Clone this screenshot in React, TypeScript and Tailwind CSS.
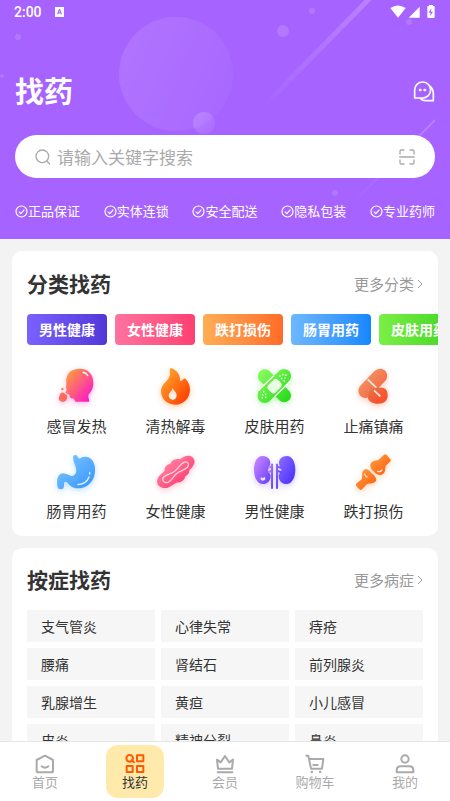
import React, { ReactNode } from 'react'

const chips = [
  { name: '男性健康', color: 'from-[#7b61ff] to-[#5237d8]' },
  { name: '女性健康', color: 'from-[#ff719f] to-[#ff3f72]' },
  { name: '跌打损伤', color: 'from-[#ffad55] to-[#ff6b29]' },
  { name: '肠胃用药', color: 'from-[#6db8ff] to-[#1187ff]' },
  { name: '皮肤用药', color: 'from-[#7bef45] to-[#37d421]' },
]

const symptoms = [
  '支气管炎', '心律失常', '痔疮',
  '腰痛', '肾结石', '前列腺炎',
  '乳腺增生', '黄疸', '小儿感冒',
  '皮炎', '精神分裂', '鼻炎',
]

const features = ['正品保证', '实体连锁', '安全配送', '隐私包装', '专业药师']

interface GradientProps {
  id: string
  from: string
  to: string
  flip?: boolean
}

function Gradient({ id, from, to, flip }: GradientProps) {
  return (
    <linearGradient id={id} x1={flip ? '1' : '0'} y1="0" x2={flip ? '0' : '1'} y2="1">
      <stop offset="0.1" stopColor={from} />
      <stop offset="0.9" stopColor={to} />
    </linearGradient>
  )
}

const categories: { name: string; viewBox: string; glow: string; icon: ReactNode }[] = [
  {
    name: '感冒发热',
    viewBox: '39 25 144 144',
    glow: 'drop-shadow-[0_2px_3px_#ff2fb055]',
    icon: (
      <>
        <defs><Gradient id="head" from="#ff9a3c" to="#ff18c8" /></defs>
        <path fill="url(#head)" d="M148 141H106C103 135 102 131 96 131C88 131 90 124 88 120C84 117 79 117 79 111C81 106 78 102 78 97C80 90 78 82 79 73C82 52 97 42 120 42C145 42 160 59 160 85C160 103 153 112 146 119C143 126 148 134 148 141Z" />
        <path fill="#ff6a5e" d="M62 116C66 111 74 114 75 118C81 119 84 126 81 132C78 140 71 142 65 141C58 140 55 134 57 128C58 124 59 121 62 116Z" />
        <circle cx="67" cy="103" r="4" fill="#ff8a58" />
        <circle cx="81" cy="113" r="4" fill="#ff7a70" />
        <path d="M130 53Q138 54 143 62" stroke="#fff" strokeWidth="5" strokeLinecap="round" fill="none" opacity=".85" />
      </>
    ),
  },
  {
    name: '清热解毒',
    viewBox: '336 25 144 144',
    glow: 'drop-shadow-[0_2px_3px_#ff6a0055]',
    icon: (
      <>
        <defs>
          <Gradient id="flame" from="#ffa82e" to="#ff3d00" />
          <linearGradient id="drop" x1="0" y1="0" x2="0" y2="1">
            <stop offset="0" stopColor="#ffd0b0" />
            <stop offset="1" stopColor="#fff" />
          </linearGradient>
        </defs>
        <path fill="url(#flame)" d="M392 40C406 44 419 56 420 73C420 80 423 80 427 76C431 71 435 70 438 74C446 83 450 94 450 106C449 132 430 150 406 150C380 150 364 132 363 110C362 87 387 80 390 60C391 51 387 44 392 40Z" />
        <path fill="url(#drop)" d="M398 100C402 108 411 114 410 123C409 131 404 135 398 135C391 135 386 130 386 122C387 113 396 109 398 100Z" />
      </>
    ),
  },
  {
    name: '皮肤用药',
    viewBox: '63 25 144 144',
    glow: 'drop-shadow-[0_2px_3px_#3fe02a55]',
    icon: (
      <>
        <defs><Gradient id="plaster" from="#84fa5e" to="#2bdc1c" /></defs>
        <g fill="url(#plaster)">
          <path d="M90 50C98 42 111 42 119 50L177 108C185 116 185 129 177 137C169 145 156 145 148 137L90 79C82 71 82 58 90 50Z" />
          <path d="M88 107L147 49C155 41 169 41 177 49C185 57 185 71 177 80L119 139C111 147 97 147 89 139C81 131 81 115 88 107Z" />
        </g>
        <path d="M86 107L131 63M135 125L181 79" stroke="#fff" strokeWidth="4" />
        <rect x="113" y="79" width="41" height="31" rx="10" fill="#e8ffe2" transform="rotate(-45 133.5 94)" />
        <g fill="#fff">
          <circle cx="150" cy="64" r="2.5" />
          <circle cx="159" cy="60" r="2.5" />
          <circle cx="168" cy="61" r="2.5" />
          <circle cx="155" cy="72" r="2.5" />
          <circle cx="165" cy="70" r="2.5" />
          <circle cx="163" cy="79" r="2.5" />
          <circle cx="101" cy="111" r="2.5" />
          <circle cx="98" cy="121" r="2.5" />
          <circle cx="107" cy="119" r="2.5" />
          <circle cx="97" cy="130" r="2.5" />
          <circle cx="107" cy="128" r="2.5" />
        </g>
      </>
    ),
  },
  {
    name: '止痛镇痛',
    viewBox: '360 25 144 144',
    glow: 'drop-shadow-[0_2px_3px_#ff5a3055]',
    icon: (
      <>
        <defs>
          <Gradient id="pill" from="#f59a68" to="#f06240" />
          <Gradient id="pill2" from="#e87048" to="#ff4a26" />
        </defs>
        <path fill="url(#pill)" d="M433 50C443 40 455 40 464 47C473 55 474 69 466 78L422 124C413 132 400 131 392 124C383 115 383 102 391 93Z" />
        <path fill="url(#pill2)" d="M424 106C434 98 450 97 461 100C470 103 473 111 473 123C473 138 461 147 444 147C427 147 414 139 414 129C414 122 418 111 424 106Z" />
        <path d="M413 74L439 99M432 107L451 125" stroke="#ffe9df" strokeWidth="5" />
      </>
    ),
  },
  {
    name: '肠胃用药',
    viewBox: '39 9 144 144',
    glow: 'drop-shadow-[0_2px_3px_#3f9fff55]',
    icon: (
      <>
        <defs><Gradient id="stomach" from="#7cc6ff" to="#3a97ff" /></defs>
        <path fill="url(#stomach)" d="M100 33C103 29 110 29 112 34C114 39 117 42 122 39C131 34 144 34 153 42C166 53 168 76 162 95C154 118 135 130 112 130C98 130 90 122 83 114C77 108 72 109 72 117C72 124 72 128 69 131C65 133 57 133 54 130C49 114 50 96 61 87C73 79 86 92 96 93C106 92 111 82 108 70C105 56 97 45 100 33Z" />
        <path d="M114 119Q139 117 147 96M149 87V82" stroke="#e8f5ff" strokeWidth="4" strokeLinecap="round" fill="none" />
      </>
    ),
  },
  {
    name: '女性健康',
    viewBox: '336 9 144 144',
    glow: 'drop-shadow-[0_2px_3px_#ff4a8055]',
    icon: (
      <>
        <defs><Gradient id="pad" from="#ff92ac" to="#ff2e68" /></defs>
        <path fill="url(#pad)" d="M354 99C360 87 370 83 374 77C372 66 381 58 391 56C396 43 411 40 420 43C431 33 449 27 459 38C469 49 462 64 448 75C448 85 444 90 436 93C434 105 425 113 408 113C396 121 385 131 371 129C354 126 347 113 354 99Z" />
        <path d="M372 95C384 87 392 89 406 77C418 67 421 55 434 51C444 49 449 58 443 66C434 76 423 75 411 85C398 95 397 106 384 112C371 116 363 103 372 95Z" stroke="#ffd0dc" strokeWidth="4" fill="none" />
      </>
    ),
  },
  {
    name: '男性健康',
    viewBox: '63 9 144 144',
    glow: 'drop-shadow-[0_2px_3px_#7a5cff55]',
    icon: (
      <>
        <defs>
          <Gradient id="kidneyLeft" from="#c982ff" to="#6a48f8" />
          <Gradient id="kidneyRight" from="#8a66ff" to="#4a32ff" />
        </defs>
        <g fill="url(#kidneyLeft)">
          <path d="M97 33C112 33 121 42 121 54C121 63 114 68 114 75C114 83 123 85 122 95C121 107 112 117 99 117C82 117 72 97 72 74C72 50 82 33 97 33Z" />
          <path d="M123 56H129V131H123V82L114 85V79L123 75V68L114 72V66L123 62Z" />
        </g>
        <g fill="url(#kidneyRight)">
          <path d="M171 33C156 33 147 42 147 54C147 63 154 68 154 75C154 83 145 85 146 95C147 107 156 117 169 117C186 117 196 97 196 74C196 50 186 33 171 33Z" />
          <path d="M144 56H138V131H144V82L154 85V79L144 75V68L154 72V66L144 62Z" />
        </g>
        <path d="M93 98Q98 103 104 97Q107 106 99 106Q91 106 93 98Z" fill="#f4eaff" stroke="#f4eaff" strokeWidth="2" />
      </>
    ),
  },
  {
    name: '跌打损伤',
    viewBox: '360 9 144 144',
    glow: 'drop-shadow-[0_2px_3px_#ff7a2055]',
    icon: (
      <>
        <defs><Gradient id="bone" from="#ff9a3a" to="#ff5f12" /></defs>
        <g fill="url(#bone)">
          <path d="M462 29Q466 26 470 30L481 43Q484 47 480 50L467 62C464 71 468 79 459 87C450 94 440 87 435 83C428 77 420 71 421 60C423 48 435 47 446 45Z" />
          <path d="M380 115L396 102C397 94 394 77 405 73C414 71 419 78 424 84C433 91 440 98 438 107C433 116 422 114 411 117L396 133Q392 137 388 133L379 123Q376 119 380 115Z" />
        </g>
        <path d="M443 79Q451 82 456 75M404 87Q405 94 411 96" stroke="#ffe3cc" strokeWidth="4" strokeLinecap="round" fill="none" />
      </>
    ),
  },
]

const tabs: { name: string; viewBox: string; active?: boolean; icon: ReactNode }[] = [
  {
    name: '首页',
    viewBox: '99 96 72 72',
    icon: <path d="M135 107L159 120V152Q159 157 154 157H115Q110 157 110 152V120ZM125 139Q135 147 145 139" />,
  },
  {
    name: '找药',
    viewBox: '369 96 72 72',
    active: true,
    icon: (
      <>
        <circle cx="389" cy="115" r="10" />
        <path d="M395 121L402 127M411 106H430V124H411ZM380 138H398V156H380ZM411 138H430V156H411Z" />
      </>
    ),
  },
  {
    name: '会员',
    viewBox: '639 96 72 72',
    icon: <path d="M651 119L662 127L675 108L688 127L699 119L696 146H654ZM653 157H697" />,
  },
  {
    name: '购物车',
    viewBox: '909 96 72 72',
    icon: (
      <>
        <path d="M919 107H925L933 146H966L970 117H928M940 135H953" />
        <path d="M935 156h1M960 156h1" strokeWidth="7" />
      </>
    ),
  },
  {
    name: '我的',
    viewBox: '1179 96 72 72',
    icon: (
      <>
        <circle cx="1215" cy="117" r="11" />
        <path d="M1190 157V151Q1190 139 1203 139H1228Q1240 139 1240 151V157Z" />
      </>
    ),
  },
]

function HeaderArt() {
  return (
    <svg className="absolute inset-0 h-full w-full" viewBox="0 0 450 239" preserveAspectRatio="xMidYMid slice" aria-hidden="true">
      <defs>
        <linearGradient id="bubble" x1="0" y1="0.3" x2="1" y2="0.7">
          <stop offset="0" stopColor="#fff" stopOpacity="0.11" />
          <stop offset="1" stopColor="#fff" stopOpacity="0.03" />
        </linearGradient>
        <linearGradient id="smallBubble" x1="0" y1="0" x2="1" y2="1">
          <stop offset="0" stopColor="#fff" stopOpacity="0.18" />
          <stop offset="1" stopColor="#fff" stopOpacity="0.06" />
        </linearGradient>
        <linearGradient id="ray" x1="1" y1="0" x2="0" y2="1">
          <stop offset="0" stopColor="#fff" stopOpacity="0.2" />
          <stop offset="1" stopColor="#fff" stopOpacity="0" />
        </linearGradient>
      </defs>
      <circle cx="176" cy="74" r="57" fill="url(#bubble)" />
      <circle cx="204" cy="123" r="11" fill="url(#smallBubble)" />
      <path d="M370 -2L258 112" stroke="url(#ray)" strokeWidth="5" />
      <path d="M435 120L350 206" stroke="url(#ray)" strokeWidth="2" />
      <g fill="#fff" fillOpacity="0.14">
        <circle cx="18" cy="37" r="3" />
        <circle cx="2" cy="76" r="2" />
        <circle cx="283" cy="31" r="6" />
        <circle cx="312" cy="11" r="3" />
        <circle cx="409" cy="22" r="3" />
        <circle cx="335" cy="193" r="3" />
      </g>
    </svg>
  )
}

function StatusBar() {
  return (
    <div className="flex h-6 items-center justify-between px-[14px]">
      <div className="flex items-center gap-[13px]">
        <span className="font-[Roboto] text-sm font-medium">2:00</span>
        <svg className="h-[10px] w-[9px]" viewBox="0 0 27 30" fill="#fff">
          <path fillRule="evenodd" d="M1 0H26Q27 0 27 1V29Q27 30 26 30H1Q0 30 0 29V1Q0 0 1 0ZM12 6L6 22H10L11 19H16L17 22H21L15 6ZM13 11L15 16H12Z" />
        </svg>
      </div>
      <svg className="h-[14px] w-[46px]" viewBox="0 0 138 42" fill="#fff">
        <path d="M1 9Q24 -6 47 9L24 38Z" />
        <path d="M89 5V38H56Z" />
        <path fillRule="evenodd" d="M117 3V0H129V3H132Q134 3 134 6V36Q134 39 131 39H115Q112 39 112 36V6Q112 3 114 3ZM124 9L116 23H122L120 34L129 20H123Z" />
      </svg>
    </div>
  )
}

function CheckIcon() {
  return (
    <svg className="h-[13px] w-[13px]" viewBox="0 0 13 13" fill="none" stroke="#fff" strokeWidth="1.2">
      <circle cx="6.5" cy="6.5" r="5.5" />
      <path d="M3.8 6.6L5.8 8.6L9.4 4.6" />
    </svg>
  )
}

function CardTitle({ title, more }: { title: string; more: string }) {
  return (
    <div className="flex h-8 items-center justify-between pr-[15px]">
      <h2 className="text-[21px] font-bold">{title}</h2>
      <a href="#" className="flex items-center gap-[3px] text-[15px] text-[#999]">
        {more}
        <svg className="h-[10px] w-[6px]" viewBox="0 0 6 10" fill="none" stroke="#999">
          <path d="M1 1L5 5L1 9" />
        </svg>
      </a>
    </div>
  )
}

export default function App() {
  return (
    <div className="flex h-screen flex-col bg-[#f3f3f3] font-['Noto_Sans_CJK_SC',sans-serif] text-[#333]">
      <div className="flex-1 overflow-y-auto [scrollbar-width:none]">
        <header className="relative h-[239px] overflow-hidden bg-[#a663ff] text-white">
          <HeaderArt />
          <div className="relative">
            <StatusBar />
            <div className="mt-[47px] flex h-10 items-center justify-between px-[15px]">
              <h1 className="text-[29px] font-bold">找药</h1>
              <button aria-label="客服">
                <svg className="h-[22px] w-[22px]" viewBox="0 0 66 66" fill="none" stroke="#fff" strokeWidth="5" strokeLinejoin="round">
                  <path d="M5 54V29A24 24 0 1 1 29 54Z" />
                  <path d="M50 18Q61 27 61 41V62H38Q28 62 22 55" />
                  <path d="M21 30h1M35 30h1" strokeWidth="8" strokeLinecap="round" />
                </svg>
              </button>
            </div>
            <div className="mx-[15px] mt-6 flex h-[43px] items-center rounded-full bg-white px-5">
              <svg className="h-4 w-4" viewBox="0 0 48 48" fill="none" stroke="#aaa" strokeWidth="4" strokeLinecap="round">
                <circle cx="22" cy="22" r="19" />
                <path d="M36 37L44 45" />
              </svg>
              <input
                type="text"
                aria-label="搜索"
                placeholder="请输入关键字搜索"
                className="ml-[6px] min-w-0 flex-1 text-[17px] text-[#333] outline-none placeholder:text-[#aaa]"
              />
              <button aria-label="扫一扫">
                <svg className="h-4 w-4" viewBox="0 0 48 48" fill="none" stroke="#aaa" strokeWidth="4" strokeLinecap="round">
                  <path d="M3 15V7Q3 3 7 3H15M33 3H41Q45 3 45 7V15M45 33V41Q45 45 41 45H33M15 45H7Q3 45 3 41V33M2 24H46" />
                </svg>
              </button>
            </div>
            <ul className="mt-[23px] flex justify-between px-[15px]">
              {features.map((name) => (
                <li key={name} className="flex items-center text-[13px] leading-5">
                  <CheckIcon />
                  {name}
                </li>
              ))}
            </ul>
          </div>
        </header>

        <section className="mx-3 mt-3 overflow-hidden rounded-[10px] bg-white pb-[13px] pl-[15px] pt-[17px]">
          <CardTitle title="分类找药" more="更多分类" />
          <div className="mt-[14px] flex gap-2 overflow-x-auto [scrollbar-width:none]">
            {chips.map(({ name, color }) => (
              <button key={name} className={`h-[31px] w-20 shrink-0 rounded-sm bg-linear-to-r pb-[2px] text-sm font-bold text-white ${color}`}>
                {name}
              </button>
            ))}
          </div>
          <div className="mt-[18px] grid grid-cols-4 gap-y-[10px] pr-[15px]">
            {categories.map(({ name, viewBox, glow, icon }) => (
              <a key={name} href="#" className="flex flex-col items-center">
                <svg className={`h-12 w-12 ${glow}`} viewBox={viewBox}>{icon}</svg>
                <span className="mt-[3px] text-[15px] leading-6">{name}</span>
              </a>
            ))}
          </div>
        </section>

        <section className="mx-3 mt-3 rounded-[10px] bg-white pb-4 pl-[15px] pt-4">
          <CardTitle title="按症找药" more="更多病症" />
          <div className="mt-[14px] grid grid-cols-3 gap-[6px] pr-[15px]">
            {symptoms.map((name) => (
              <a key={name} href="#" className="h-8 bg-[#f6f6f6] pl-[14px] text-sm leading-8">{name}</a>
            ))}
          </div>
        </section>
      </div>

      <nav className="grid h-[60px] shrink-0 grid-cols-5 border-t border-[#e6e6e6] bg-white pt-[3px]">
        {tabs.map(({ name, viewBox, active, icon }) => (
          <a
            key={name}
            href="#"
            className={`mx-auto flex h-[53px] w-[58px] flex-col items-center rounded-xl pt-[7px] text-[13px] leading-3 ${active ? 'bg-[#ffe9ab] text-[#333]' : 'text-[#aaa]'}`}
          >
            <svg
              className={`h-6 w-6 ${active ? 'text-[#ff5a00]' : ''}`}
              viewBox={viewBox}
              fill="none"
              stroke="currentColor"
              strokeWidth="6"
              strokeLinejoin="round"
              strokeLinecap="round"
            >
              {icon}
            </svg>
            {name}
          </a>
        ))}
      </nav>
    </div>
  )
}
